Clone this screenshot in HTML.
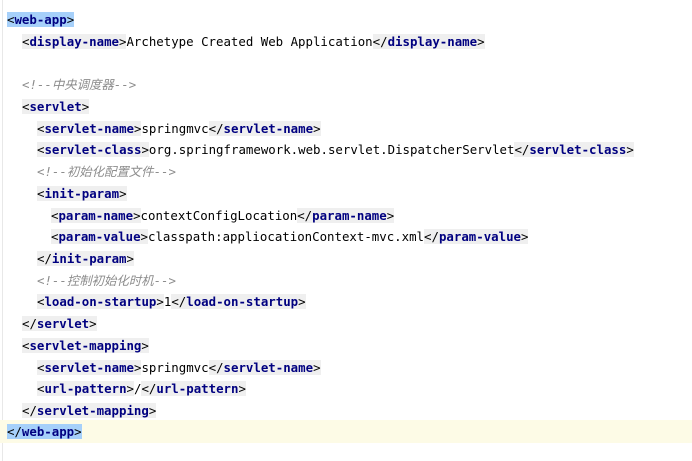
<!DOCTYPE html>
<html><head><meta charset="utf-8"><style>
body{margin:0;width:692px;height:461px;background:#fff;overflow:hidden;position:relative;font-family:"DejaVu Sans Mono","Noto Sans CJK SC",monospace;font-size:12.4px;}
.gut{position:absolute;left:2px;top:0;width:1px;height:461px;background:#e8e8e8}
.l{position:absolute;left:0;height:21.7px;line-height:21.7px;white-space:pre;color:#000;width:692px;margin-top:1px}
.t{background:#efefef}
.t b{color:#000080;font-weight:bold}
.h{background:#a6d0fa}
.c{color:#8c8c8c;font-style:italic}
.cur{background:#fdfbe6;margin-top:0;padding-top:1px}
</style></head><body>
<div class="gut"></div>
<div class="l" style="top:8px;padding-left:7px"><span class="h">&lt;<b style="color:#000080">web-app</b>&gt;</span></div>
<div class="l" style="top:30px;padding-left:22px"><span class="t">&lt;<b>display-name</b>&gt;</span>Archetype Created Web Application<span class="t">&lt;/<b>display-name</b>&gt;</span></div>
<div class="l c" style="top:73px;padding-left:22px">&lt;!--中央调度器--&gt;</div>
<div class="l" style="top:95px;padding-left:22px"><span class="t">&lt;<b>servlet</b>&gt;</span></div>
<div class="l" style="top:117px;padding-left:37px"><span class="t">&lt;<b>servlet-name</b>&gt;</span>springmvc<span class="t">&lt;/<b>servlet-name</b>&gt;</span></div>
<div class="l" style="top:138px;padding-left:37px"><span class="t">&lt;<b>servlet-class</b>&gt;</span>org.springframework.web.servlet.DispatcherServlet<span class="t">&lt;/<b>servlet-class</b>&gt;</span></div>
<div class="l c" style="top:160px;padding-left:37px">&lt;!--初始化配置文件--&gt;</div>
<div class="l" style="top:182px;padding-left:37px"><span class="t">&lt;<b>init-param</b>&gt;</span></div>
<div class="l" style="top:204px;padding-left:51px"><span class="t">&lt;<b>param-name</b>&gt;</span>contextConfigLocation<span class="t">&lt;/<b>param-name</b>&gt;</span></div>
<div class="l" style="top:225px;padding-left:51px"><span class="t">&lt;<b>param-value</b>&gt;</span>classpath:appliocationContext-mvc.xml<span class="t">&lt;/<b>param-value</b>&gt;</span></div>
<div class="l" style="top:247px;padding-left:37px"><span class="t">&lt;/<b>init-param</b>&gt;</span></div>
<div class="l c" style="top:269px;padding-left:37px">&lt;!--控制初始化时机--&gt;</div>
<div class="l" style="top:290px;padding-left:37px"><span class="t">&lt;<b>load-on-startup</b>&gt;</span>1<span class="t">&lt;/<b>load-on-startup</b>&gt;</span></div>
<div class="l" style="top:312px;padding-left:22px"><span class="t">&lt;/<b>servlet</b>&gt;</span></div>
<div class="l" style="top:334px;padding-left:22px"><span class="t">&lt;<b>servlet-mapping</b>&gt;</span></div>
<div class="l" style="top:356px;padding-left:37px"><span class="t">&lt;<b>servlet-name</b>&gt;</span>springmvc<span class="t">&lt;/<b>servlet-name</b>&gt;</span></div>
<div class="l" style="top:377px;padding-left:37px"><span class="t">&lt;<b>url-pattern</b>&gt;</span>/<span class="t">&lt;/<b>url-pattern</b>&gt;</span></div>
<div class="l" style="top:399px;padding-left:22px"><span class="t">&lt;/<b>servlet-mapping</b>&gt;</span></div>
<div class="l cur" style="top:420px;padding-left:7px"><span class="h">&lt;/<b style="color:#000080">web-app</b>&gt;</span></div>
</body></html>
